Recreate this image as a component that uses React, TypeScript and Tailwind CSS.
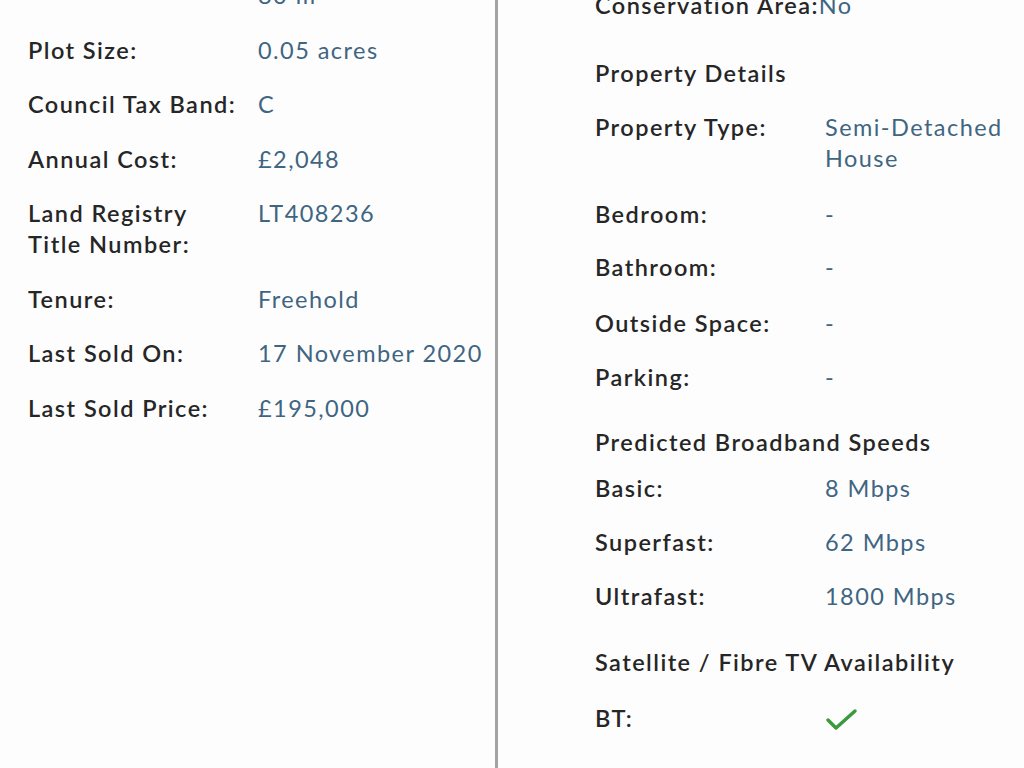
import React from "react";

const font = { fontFamily: "Lato, 'Open Sans', sans-serif" };

function Row({ label, value, className = "" }: { label: React.ReactNode; value: React.ReactNode; className?: string }) {
  return (
    <div className={`grid grid-cols-[230px_1fr] leading-[31px] ${className}`}>
      <div className="font-semibold text-[#262626]">{label}</div>
      <div className="text-[#3f6581]">{value}</div>
    </div>
  );
}

function Heading({ children, className = "" }: { children: React.ReactNode; className?: string }) {
  return <div className={`font-semibold text-[#262626] leading-[31px] ${className}`}>{children}</div>;
}

export default function App() {
  return (
    <div className="w-[1024px] h-[768px] overflow-hidden bg-[#fdfdfe] flex text-[23.5px] tracking-[1.45px]" style={font}>
      <div className="w-[498px] h-full border-r-[3px] border-[#a3a3a3] pl-[28px]">
        <div className="flex flex-col gap-[23.5px] -mt-[20px]">
          <Row label="" value={<span>80 m²</span>} />
          <Row label="Plot Size:" value="0.05 acres" />
          <Row label="Council Tax Band:" value="C" />
          <Row label="Annual Cost:" value="£2,048" />
          <Row label={<>Land Registry<br />Title Number:</>} value="LT408236" />
          <Row label="Tenure:" value="Freehold" />
          <Row label="Last Sold On:" value="17 November 2020" />
          <Row label="Last Sold Price:" value="£195,000" />
        </div>
      </div>
      <div className="flex-1 pl-[97px] flex flex-col -mt-[10.5px]">
        <div className="leading-[31px] font-semibold text-[#262626]">
          Conservation Area:<span className="font-normal text-[#3f6581]">No</span>
        </div>
        <Heading className="mt-[37px]">Property Details</Heading>
        <Row className="mt-[23px]" label="Property Type:" value={<>Semi-Detached<br />House</>} />
        <Row className="mt-[25px]" label="Bedroom:" value="-" />
        <Row className="mt-[22px]" label="Bathroom:" value="-" />
        <Row className="mt-[25px]" label="Outside Space:" value="-" />
        <Row className="mt-[23px]" label="Parking:" value="-" />
        <Heading className="mt-[34px]">Predicted Broadband Speeds</Heading>
        <Row className="mt-[15px]" label="Basic:" value="8 Mbps" />
        <Row className="mt-[23px]" label="Superfast:" value="62 Mbps" />
        <Row className="mt-[23px]" label="Ultrafast:" value="1800 Mbps" />
        <Heading className="mt-[35px]">Satellite / Fibre TV Availability</Heading>
        <Row
          className="mt-[25px]"
          label="BT:"
          value={
            <svg width="34" height="28" viewBox="0 0 34 28" className="mt-[2px]">
              <polyline points="3,15 11,23 30,6" fill="none" stroke="#3b9a3e" strokeWidth="3.5" strokeLinecap="round" strokeLinejoin="round" />
            </svg>
          }
        />
      </div>
    </div>
  );
}
